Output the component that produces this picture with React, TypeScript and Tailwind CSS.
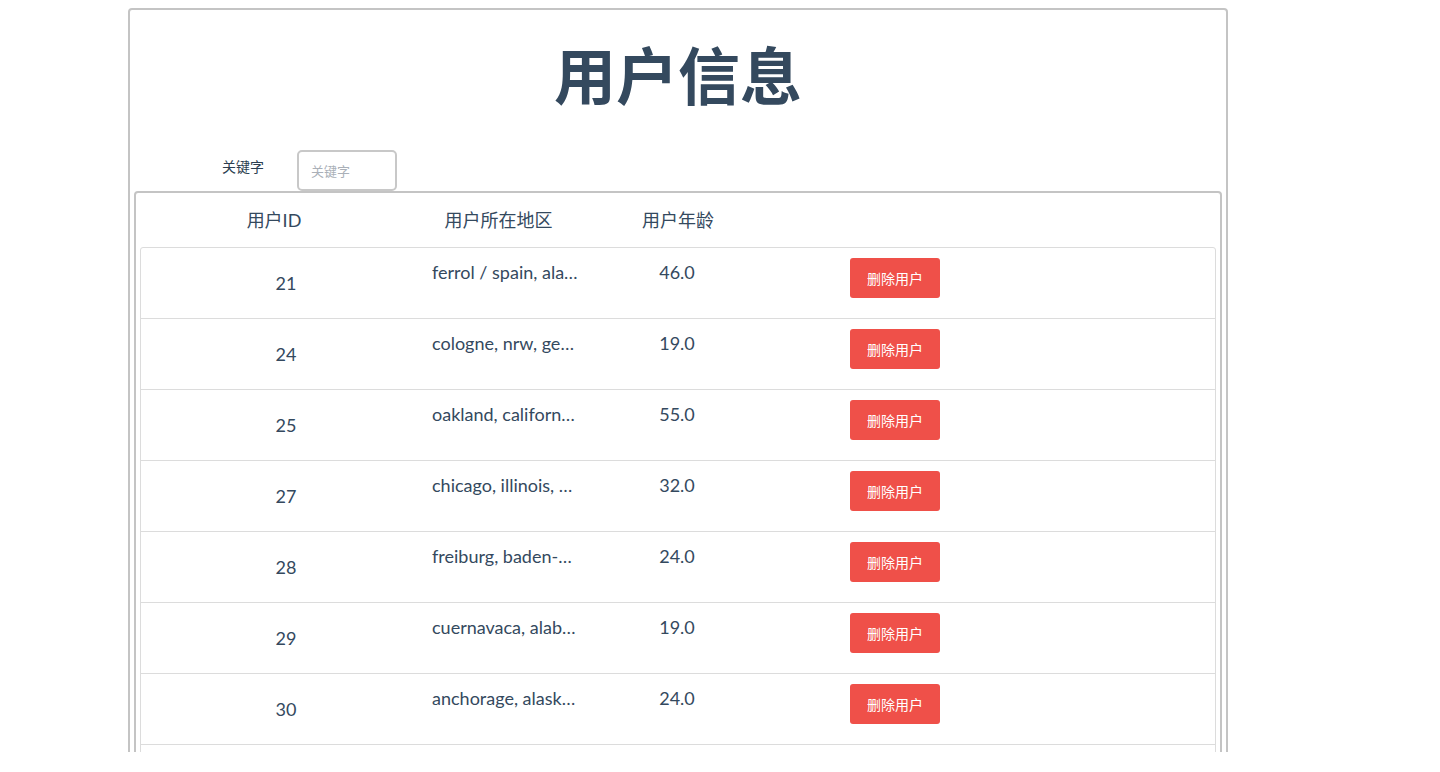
import React from "react";

const rows = [
  { id: 21, loc: "ferrol / spain, alava, spain", age: "46.0" },
  { id: 24, loc: "cologne, nrw, germany", age: "19.0" },
  { id: 25, loc: "oakland, california, usa", age: "55.0" },
  { id: 27, loc: "chicago, illinois, usa", age: "32.0" },
  { id: 28, loc: "freiburg, baden-wuerttemberg, germany", age: "24.0" },
  { id: 29, loc: "cuernavaca, alabama, mexico", age: "19.0" },
  { id: 30, loc: "anchorage, alaska, usa", age: "24.0" },
  { id: 31, loc: "hamburg, hamburg, germany", age: "28.0" },
];

export default function App() {
  return (
    <div
      className="w-[1440px] h-[772px] overflow-hidden bg-white text-[#2c3e50]"
      style={{ fontFamily: "Lato, 'Noto Sans CJK SC', sans-serif" }}
    >
      <div className="h-[752px] overflow-hidden">
        <div className="ml-[128px] mt-[8px] w-[1100px] border-2 border-[#c4c4c4] rounded-[4px] pb-4">
          <h1 className="pt-[36px] text-center text-[62px] leading-[60px] font-bold text-[#34495e]">
            用户信息
          </h1>
          <div className="mt-[44px] flex items-start">
            <span className="ml-[92px] mt-[7px] text-[14px] leading-[20px] text-[#2c3e50]">关键字</span>
            <input
              placeholder="关键字"
              className="ml-[33px] w-[100px] h-[41px] border-2 border-[#c8c8c8] rounded-[5px] px-[12px] text-[13px] placeholder:text-[#aab0b8] outline-none"
            />
          </div>
          <div className="mx-[4px] border-2 border-[#c4c4c4] rounded-[4px] pb-4">
            <div className="flex h-[54px] items-center text-[18px] text-[#34495e]">
              <div className="w-[276px] text-center">用户ID</div>
              <div className="w-[173px] text-center">用户所在地区</div>
              <div className="w-[186px] text-center">用户年龄</div>
            </div>
            <div className="mx-[4px] border border-[#dcdcdc] rounded-[3px]">
              {rows.map((r, i) => (
                <div
                  key={r.id}
                  className={
                    "flex text-[18px] text-[#34495e] " +
                    (i > 0 ? "h-[71px] border-t border-[#dcdcdc]" : "h-[70px]")
                  }
                >
                  <div className="w-[290px] flex items-center justify-center">{r.id}</div>
                  <div className="ml-[1px] w-[147px] pt-[11px] text-center whitespace-nowrap overflow-hidden text-ellipsis">
                    {r.loc}
                  </div>
                  <div className="w-[196px] pt-[11px] text-center">{r.age}</div>
                  <div className="ml-[75px] pt-[10px]">
                    <button className="w-[90px] h-[40px] rounded-[3px] bg-[#ef5049] text-white text-[14px]">
                      删除用户
                    </button>
                  </div>
                </div>
              ))}
            </div>
          </div>
        </div>
      </div>
    </div>
  );
}
